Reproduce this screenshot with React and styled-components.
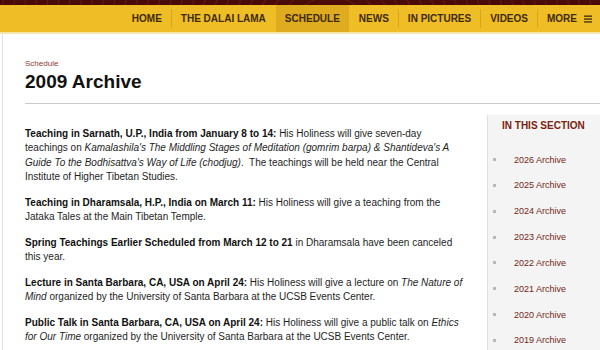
import React from "react";
import styled, { createGlobalStyle } from "styled-components";

const Global = createGlobalStyle`
  html, body { margin: 0; padding: 0; background: #ffffff; }
  body { font-family: "Liberation Sans", Arial, sans-serif; color: #1c1c1c; overflow: hidden; }
`;

const TopBand = styled.div`
  height: 5px;
  background-color: #4a0b08;
  background-image: repeating-radial-gradient(circle at 330px 40px, rgba(120, 30, 20, 0) 0, rgba(120, 30, 20, 0) 9px, rgba(125, 35, 25, 0.55) 10px, rgba(120, 30, 20, 0) 11px);
`;

const NavBar = styled.nav`
  height: 27px;
  background: #efbd25;
  border-bottom: 2px solid #f7e4a8;
  display: flex;
  justify-content: flex-end;
  align-items: stretch;
`;

const NavItem = styled.a`
  display: flex;
  align-items: center;
  gap: 7px;
  padding: 0 ${(p) => (p.$last ? "8px" : "9px")} 0 9px;
  font-size: 10px;
  font-weight: 700;
  color: #3e2a0c;
  text-decoration: none;
  white-space: nowrap;
  background: ${(p) => (p.$active ? "#dfab1f" : "transparent")};
`;

const NavSep = styled.span`
  width: 1px;
  height: 19px;
  align-self: center;
  background: ${(p) => (p.$hidden ? "transparent" : "#d9a71d")};
`;

const Page = styled.div`
  margin-left: 2px;
  border-left: 1px solid #e3e3e3;
  min-height: 320px;
`;

const TitleBlock = styled.header`
  margin-left: 22px;
  padding-top: 25px;
  padding-bottom: 10px;
  border-bottom: 1px solid #c9c9c9;
`;

const Crumb = styled.div`
  font-size: 8px;
  line-height: 10px;
  color: #8a3b36;
`;

const Title = styled.h1`
  margin: 2px 0 0;
  font-size: 19px;
  line-height: 22px;
  font-weight: 700;
  color: #111;
`;

const Body = styled.div`
  display: grid;
  grid-template-columns: 440px 1fr;
  column-gap: 22px;
  padding-left: 22px;
  align-items: start;
`;

const Main = styled.main`
  padding-top: 22.5px;
`;

const Para = styled.p`
  margin: 0 0 11px;
  font-size: 10px;
  line-height: 14.5px;
  color: #1e1e1e;
  b { color: #111; font-weight: 700; }
  i { font-style: italic; }
`;

const Sidebar = styled.aside`
  margin-top: 11px;
  background: #f4f4f4;
  border-left: 1px solid #dedede;
  padding: 5px 0 30px 14px;
  min-height: 260px;
`;

const SideHeading = styled.h3`
  margin: 0 0 14.6px;
  font-size: 10px;
  line-height: 12px;
  font-weight: 700;
  color: #7b1f10;
  text-transform: uppercase;
`;

const SideList = styled.ul`
  list-style: none;
  margin: 0 0 0 -9px;
  padding: 0;
`;

const SideItem = styled.li`
  display: flex;
  align-items: center;
  gap: 18px;
  height: 25.85px;
  font-size: 9px;
  color: #722617;
`;

const Bullet = styled.span`
  width: 3px;
  height: 3px;
  background: #b9b9b9;
  flex: none;
`;

const Hamburger = () => (
  <svg width="8" height="8" viewBox="0 0 8 8" aria-hidden="true">
    <rect x="0" y="0.5" width="8" height="1.3" fill="#3e2a0c" />
    <rect x="0" y="3.4" width="8" height="1.3" fill="#3e2a0c" />
    <rect x="0" y="6.3" width="8" height="1.3" fill="#3e2a0c" />
  </svg>
);

const navItems = ["HOME", "THE DALAI LAMA", "SCHEDULE", "NEWS", "IN PICTURES", "VIDEOS", "MORE"];
const years = [2026, 2025, 2024, 2023, 2022, 2021, 2020, 2019, 2018, 2017];

export default function App() {
  return (
    <>
      <Global />
      <TopBand />
      <NavBar>
        {navItems.map((label, i) => (
          <React.Fragment key={label}>
            {i > 0 && <NavSep $hidden={label === "SCHEDULE" || navItems[i - 1] === "SCHEDULE"} />}
            <NavItem href="#" $active={label === "SCHEDULE"} $last={label === "MORE"}>
              {label}
              {label === "MORE" && <Hamburger />}
            </NavItem>
          </React.Fragment>
        ))}
      </NavBar>
      <Page>
        <TitleBlock>
          <Crumb>Schedule</Crumb>
          <Title>2009 Archive</Title>
        </TitleBlock>
        <Body>
          <Main>
            <Para>
              <b>Teaching in Sarnath, U.P., India from January 8 to 14:</b> His Holiness will give seven-day
              teachings on <i>Kamalashila's The Middling Stages of Meditation (gomrim barpa) &amp; Shantideva's A
              Guide To the Bodhisattva's Way of Life (chodjug)</i>.{"\u00a0"} The teachings will be held near the Central
              Institute of Higher Tibetan Studies.
            </Para>
            <Para>
              <b>Teaching in Dharamsala, H.P., India on March 11:</b> His Holiness will give a teaching from the
              Jataka Tales at the Main Tibetan Temple.
            </Para>
            <Para>
              <b>Spring Teachings Earlier Scheduled from March 12 to 21</b> in Dharamsala have been canceled
              this year.
            </Para>
            <Para>
              <b>Lecture in Santa Barbara, CA, USA on April 24:</b> His Holiness will give a lecture on <i>The Nature of
              Mind</i> organized by the University of Santa Barbara at the UCSB Events Center.
            </Para>
            <Para>
              <b>Public Talk in Santa Barbara, CA, USA on April 24:</b> His Holiness will give a public talk on <i>Ethics
              for Our Time</i> organized by the University of Santa Barbara at the UCSB Events Center.
            </Para>
          </Main>
          <Sidebar>
            <SideHeading>In This Section</SideHeading>
            <SideList>
              {years.map((y) => (
                <SideItem key={y}>
                  <Bullet />
                  {y} Archive
                </SideItem>
              ))}
            </SideList>
          </Sidebar>
        </Body>
      </Page>
    </>
  );
}
